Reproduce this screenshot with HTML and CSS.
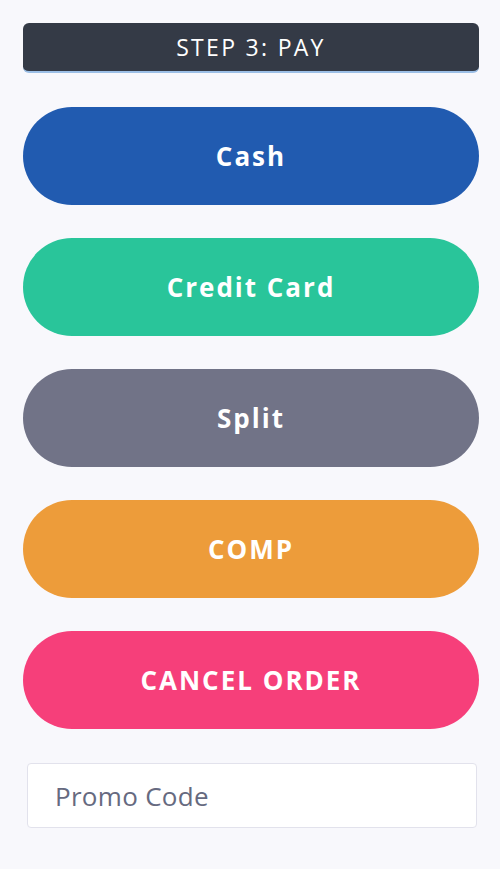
FILE: index.html
```html
<!DOCTYPE html>
<html>
<head>
    <meta charset="UTF-8">
    <title>Step 3: Pay</title>
    <link rel="stylesheet" href="styles.css">
</head>
<body>
<div class="payBox">
    <div class="stepTitle">STEP 3: PAY</div>
    <button class="payBtn cash">Cash</button>
    <button class="payBtn credit">Credit Card</button>
    <button class="payBtn split">Split</button>
    <button class="payBtn comp">COMP</button>
    <button class="payBtn cancel">CANCEL ORDER</button>
    <div class="promoWrap">
        <input class="promo" type="text" placeholder="Promo Code">
    </div>
</div>
</body>
</html>
```

FILE: styles.css
```css
* {
    margin: 0;
    padding: 0;
    box-sizing: border-box;
    font-family: "Open Sans", "Noto Sans", Helvetica, sans-serif;
}

html, body {
    background: #f8f8fc;
}

.payBox {
    width: 456px;
    margin: 23px 0 0 23px;
    display: flex;
    flex-direction: column;
}

.stepTitle {
    height: 50px;
    line-height: 48px;
    text-align: center;
    color: #fff;
    font-size: 23px;
    letter-spacing: 2.3px;
    background: #343a46;
    border-radius: 6px;
    border-bottom: 2px solid #9cbfe6;
    margin-bottom: 34px;
}

.payBtn {
    height: 98px;
    border: none;
    border-radius: 49px;
    color: #fff;
    font-size: 26px;
    font-weight: 700;
    letter-spacing: 2px;
    margin-bottom: 33px;
    cursor: pointer;
}

.cash { background: #215bb0; }
.credit { background: #29c59a; }
.split { background: #717387; }
.comp { background: #ed9c3a; }
.cancel { background: #f63f7a; }

.promoWrap {
    padding: 1px 2px 0 4px;
}

.promo {
    width: 100%;
    height: 65px;
    border: 1px solid #e2e2ec;
    border-radius: 4px;
    background: #fff;
    padding: 0 27px;
    font-size: 26px;
    letter-spacing: 0.3px;
    color: #666a80;
    outline: none;
}

.promo::placeholder {
    color: #666a80;
}
```
